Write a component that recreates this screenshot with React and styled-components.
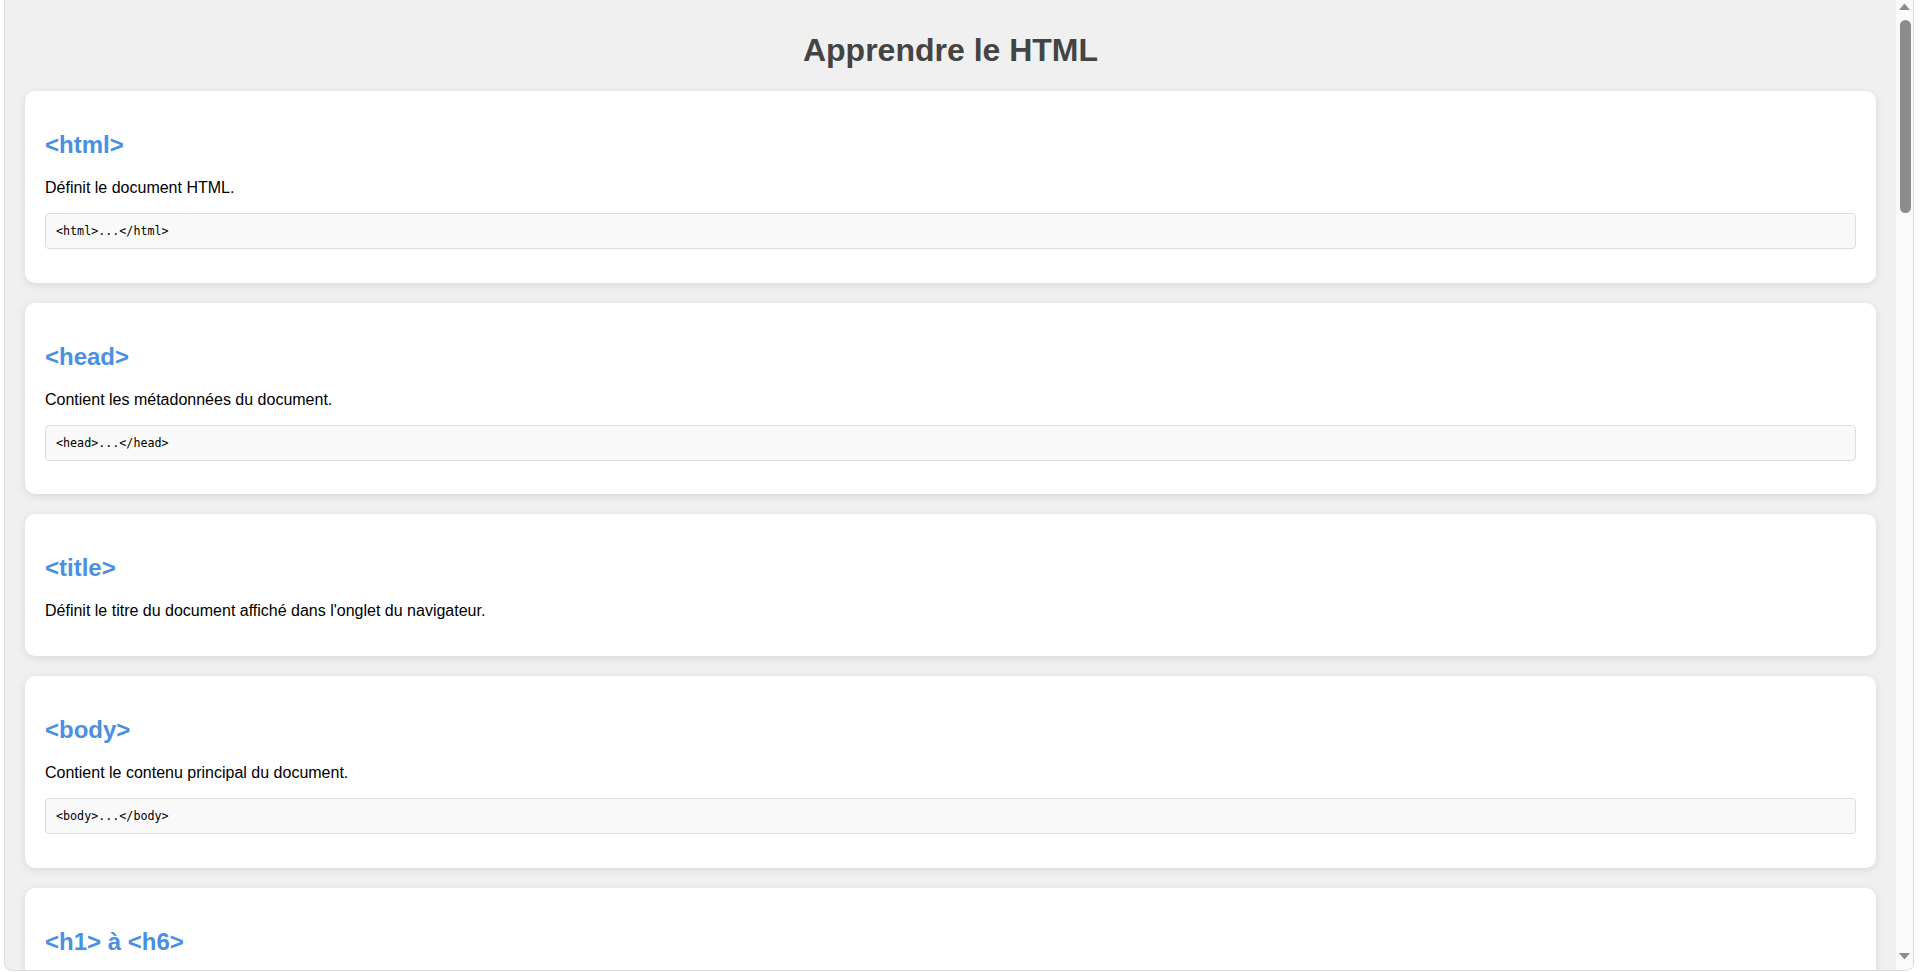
import styled, { createGlobalStyle } from "styled-components"

const GlobalStyle = createGlobalStyle`
    html, body {
        margin: 0;
        padding: 0;
        background: #ffffff;
        font-family: "Liberation Sans", Arial, sans-serif;
        overflow: hidden;
    }
`

const tags = [
    { name: "<html>", text: "Définit le document HTML.", code: "<html>...</html>" },
    { name: "<head>", text: "Contient les métadonnées du document.", code: "<head>...</head>" },
    { name: "<title>", text: "Définit le titre du document affiché dans l'onglet du navigateur." },
    { name: "<body>", text: "Contient le contenu principal du document.", code: "<body>...</body>" },
    { name: "<h1> à <h6>", text: "Définit les titres, du plus important (<h1>) au moins important (<h6>).", code: "<h1>Titre principal</h1>" },
    { name: "<p>", text: "Définit un paragraphe de texte.", code: "<p>Ceci est un paragraphe.</p>" },
    { name: "<a>", text: "Définit un lien hypertexte vers une autre page ou ressource.", code: "<a href=\"https://www.exemple.com\">Visitez le site</a>" },
    { name: "<img>", text: "Insère une image dans le document.", code: "<img src=\"image.jpg\" alt=\"Description\">" },
    { name: "<ul>", text: "Définit une liste non ordonnée (à puces).", code: "<ul><li>Élément</li></ul>" },
    { name: "<ol>", text: "Définit une liste ordonnée (numérotée).", code: "<ol><li>Premier</li></ol>" },
    { name: "<li>", text: "Définit un élément de liste." },
    { name: "<div>", text: "Définit une section ou un conteneur générique.", code: "<div>...</div>" },
    { name: "<span>", text: "Définit un conteneur en ligne pour du texte.", code: "<span>Texte</span>" },
    { name: "<table>", text: "Définit un tableau.", code: "<table>...</table>" },
    { name: "<tr>", text: "Définit une ligne dans un tableau.", code: "<tr>...</tr>" },
    { name: "<td>", text: "Définit une cellule dans un tableau.", code: "<td>Cellule</td>" },
    { name: "<form>", text: "Définit un formulaire pour la saisie de données.", code: "<form action=\"/envoyer\">...</form>" },
    { name: "<input>", text: "Définit un champ de saisie.", code: "<input type=\"text\" name=\"nom\">" },
    { name: "<button>", text: "Définit un bouton cliquable.", code: "<button>Cliquez ici</button>" },
    { name: "<br>", text: "Insère un saut de ligne." },
    { name: "<strong>", text: "Met le texte en évidence (gras).", code: "<strong>Important</strong>" },
    { name: "<em>", text: "Met l'accent sur le texte (italique).", code: "<em>Accentué</em>" },
]

const App = () => {
    return (
        <>
            <GlobalStyle />
            <Frame>
                <Viewport>
                    <Content>
                        <Title>Apprendre le HTML</Title>
                        {tags.map((tag) => (
                            <Card key={tag.name}>
                                <TagName>{tag.name}</TagName>
                                <Description>{tag.text}</Description>
                                {tag.code && <CodeBox>{tag.code}</CodeBox>}
                            </Card>
                        ))}
                    </Content>
                </Viewport>
                <ScrollBar>
                    <ArrowUp width="17" height="17" viewBox="0 0 17 17">
                        <polygon points="3,10 8.5,3.5 14,10" fill="#8c8c8c" />
                    </ArrowUp>
                    <Track>
                        <Thumb />
                    </Track>
                    <ArrowDown width="17" height="17" viewBox="0 0 17 17">
                        <polygon points="3,6 14,6 8.5,12.5" fill="#8c8c8c" />
                    </ArrowDown>
                </ScrollBar>
            </Frame>
        </>
    )
}

export default App

const Frame = styled.div`
    box-sizing: border-box;
    height: 971px;
    margin: 0 6px 0 4px;
    display: flex;
    background: #f0f0f0;
    border: 1px solid #dcdcdc;
    border-top: none;
    border-radius: 0 0 8px 8px;
    overflow: hidden;
`

const Viewport = styled.div`
    flex: 1;
    min-width: 0;
    overflow: hidden;
`

const ScrollBar = styled.div`
    width: 17px;
    flex-shrink: 0;
    display: flex;
    flex-direction: column;
    background: #fafafa;
`

const ArrowUp = styled.svg`
    display: block;
    flex-shrink: 0;
`

const ArrowDown = styled.svg`
    display: block;
    flex-shrink: 0;
    margin-bottom: 6px;
`

const Track = styled.div`
    flex: 1;
`

const Thumb = styled.div`
    width: 11px;
    height: 193px;
    margin: 3px 0 0 4px;
    background: #8c8c8c;
    border-radius: 6px;
`

const Content = styled.main`
    padding: 32px 20px 20px;
`

const Title = styled.h1`
    margin: 0 0 22px;
    font-size: 32px;
    font-weight: bold;
    line-height: normal;
    text-align: center;
    color: #444444;
`

const Card = styled.section`
    background: #ffffff;
    border-radius: 10px;
    padding: 20px;
    margin-bottom: 20px;
    box-shadow: 0 2px 8px rgba(0, 0, 0, 0.1);
`

const TagName = styled.h2`
    margin: 20px 0;
    font-size: 24px;
    font-weight: bold;
    line-height: normal;
    color: #4a90e2;
`

const Description = styled.p`
    margin: 0 0 16px;
    font-size: 16px;
    line-height: normal;
    color: #000000;
`

const CodeBox = styled.pre`
    margin: 0 0 13.5px;
    padding: 10px;
    background: #f9f9f9;
    border: 1px solid #dddddd;
    border-radius: 4px;
    font-family: "DejaVu Sans Mono", "Liberation Mono", monospace;
    font-size: 11.7px;
    line-height: 14px;
    color: #000000;
    white-space: pre-wrap;
`
